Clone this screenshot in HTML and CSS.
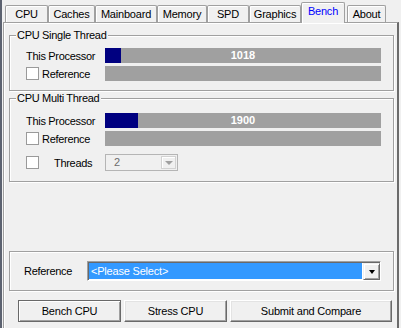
FILE: index.html
```html
<!DOCTYPE html>
<html lang="en">
<head>
  <meta charset="UTF-8">
  <title>CPU-Z Bench</title>
  <link rel="stylesheet" href="styles.css">
</head>
<body>

  <div class="window">
    <div class="tabs">
      <span class="tab tab-cpu">CPU</span>
      <span class="tab tab-caches">Caches</span>
      <span class="tab tab-mainboard">Mainboard</span>
      <span class="tab tab-memory">Memory</span>
      <span class="tab tab-spd">SPD</span>
      <span class="tab tab-graphics">Graphics</span>
      <span class="tab tab-bench active">Bench</span>
      <span class="tab tab-about">About</span>
    </div>

    <div class="panel">

      <div class="group group-single">
        <span class="legend">CPU Single Thread</span>
        <div class="rows">
          <span class="label">This Processor</span>
          <div class="bar">
            <div class="fill" style="width:16px"></div>
            <span class="score">1018</span>
          </div>
          <span class="check-label"><span class="check"></span>Reference</span>
          <div class="bar"></div>
        </div>
      </div>

      <div class="group group-multi">
        <span class="legend">CPU Multi Thread</span>
        <div class="rows">
          <span class="label">This Processor</span>
          <div class="bar">
            <div class="fill" style="width:33px"></div>
            <span class="score">1900</span>
          </div>
          <span class="check-label"><span class="check"></span>Reference</span>
          <div class="bar"></div>
          <span class="check-label threads"><span class="check"></span><span class="threads-text">Threads</span></span>
          <div class="combo">
            <span class="combo-value">2</span>
            <span class="combo-btn"><span class="arrow"></span></span>
          </div>
        </div>
      </div>

      <div class="group group-ref">
        <div class="ref-row">
          <span class="ref-label">Reference</span>
          <div class="select">
            <span class="select-value">&lt;Please Select&gt;</span>
            <span class="select-btn"><span class="arrow"></span></span>
          </div>
        </div>
      </div>

      <div class="buttons">
        <button class="btn btn-default">Bench CPU</button>
        <button class="btn">Stress CPU</button>
        <button class="btn btn-wide">Submit and Compare</button>
      </div>

    </div>
  </div>

</body>
</html>
```

FILE: styles.css
```css
body {
  margin: 0;
  background-color: #f0f0f0;
  font-family: "Liberation Sans", Arial, sans-serif;
  font-size: 11px;
  color: #000;
}

.window {
  width: 401px;
  height: 328px;
  box-sizing: border-box;
  border-left: 2px solid #5c6270;
  padding: 0 2px 0 1px;
  display: flex;
  flex-direction: column;
  overflow: hidden;
}

/* tab strip */
.tabs {
  display: flex;
  align-items: flex-end;
  height: 22px;
  padding-left: 2px;
  flex-shrink: 0;
}

.tab {
  height: 17px;
  box-sizing: border-box;
  border: 1px solid #a0a0a0;
  border-bottom: none;
  border-radius: 2px 2px 0 0;
  box-shadow: inset 1px 1px 0 #fff;
  text-align: center;
  line-height: 16px;
  letter-spacing: -0.2px;
}

.tab-cpu { width: 43px; }
.tab-caches { width: 47px; }
.tab-mainboard { width: 62px; }
.tab-memory { width: 50px; }
.tab-spd { width: 42px; }
.tab-graphics { width: 52px; }
.tab-bench { width: 44px; }
.tab-about { width: 39px; margin-left: 2px; }

.tab.active {
  height: 21px;
  margin-bottom: -1px;
  position: relative;
  z-index: 1;
  background-color: #f0f0f0;
  color: #0000ff;
  line-height: 17px;
}

/* page */
.panel {
  flex: 1;
  border-top: 1px solid #a0a0a0;
  border-left: 1px solid #a0a0a0;
  border-right: 2px solid #6b6b6b;
  box-shadow: inset 1px 1px 0 #fff;
}

.group {
  position: relative;
  border: 1px solid #a0a0a0;
  box-shadow: inset 1px 1px 0 #fff, 1px 1px 0 #fff;
  margin: 0 3px 0 5px;
}

.legend {
  position: absolute;
  top: -7px;
  left: 6px;
  padding: 0 2px 0 1px;
  background-color: #f0f0f0;
  line-height: 13px;
  letter-spacing: -0.3px;
}

.group-single {
  margin-top: 12px;
  padding: 12px 0 9px 16px;
}

.group-multi {
  margin-top: 7px;
  padding: 14px 0 10px 16px;
}

.group-ref {
  margin-top: 69px;
  padding: 9px 0 9px 14px;
}

.rows {
  display: grid;
  grid-template-columns: 79px 276px;
  row-gap: 3px;
  align-items: center;
}

.label,
.check-label,
.ref-label {
  letter-spacing: -0.3px;
}

.check-label {
  display: flex;
  align-items: center;
  gap: 3px;
}

.check {
  width: 13px;
  height: 13px;
  box-sizing: border-box;
  border: 1px solid #9a9a9a;
  background-color: #fff;
}

.threads {
  margin-top: 5px;
}

.threads-text {
  margin-left: 12px;
}

/* score bars */
.bar {
  position: relative;
  height: 15px;
  background-color: #a0a0a0;
}

.fill {
  height: 100%;
  background-color: #000080;
}

.score {
  position: absolute;
  top: 0;
  left: 0;
  right: 0;
  text-align: center;
  line-height: 15px;
  color: #fff;
  font-weight: bold;
}

/* disabled threads combo */
.combo {
  margin-top: 5px;
  width: 73px;
  height: 17px;
  box-sizing: border-box;
  border: 1px solid #b5b5b5;
  padding: 1px;
  display: flex;
}

.combo-value {
  flex: 1;
  padding-left: 7px;
  line-height: 13px;
  color: #6d6d6d;
}

.combo-btn {
  width: 15px;
  box-sizing: border-box;
  border: 1px solid #d2d2d2;
  box-shadow: inset 1px 1px 0 #fff;
  display: flex;
  align-items: center;
  justify-content: center;
}

.combo-btn .arrow {
  border-top: 4px solid #a0a0a0;
  border-left: 4px solid transparent;
  border-right: 4px solid transparent;
}

/* reference picker */
.ref-row {
  display: grid;
  grid-template-columns: 63px 294px;
  align-items: center;
}

.select {
  height: 20px;
  box-sizing: border-box;
  border: 1px solid;
  border-color: #a0a0a0 #fff #fff #a0a0a0;
  box-shadow: inset 1px 1px 0 #696969;
  background-color: #fff;
  padding: 1px 0 0 1px;
  display: flex;
}

.select-value {
  flex: 1;
  margin: 0 1px 1px 0;
  padding-left: 2px;
  background-color: #3399ff;
  color: #fff;
  line-height: 16px;
  letter-spacing: -0.2px;
}

.select-btn {
  width: 17px;
  box-sizing: border-box;
  border: 1px solid;
  border-color: #f0f0f0 #696969 #696969 #f0f0f0;
  box-shadow: inset 1px 1px 0 #fff, inset -1px -1px 0 #a0a0a0;
  background-color: #f0f0f0;
  display: flex;
  align-items: center;
  justify-content: center;
}

.select-btn .arrow {
  border-top: 4px solid #000;
  border-left: 3.5px solid transparent;
  border-right: 3.5px solid transparent;
}

/* bottom buttons */
.buttons {
  display: flex;
  gap: 3px;
  margin: 9px 0 0 14px;
}

.btn {
  width: 103px;
  height: 22px;
  padding: 0;
  font-family: inherit;
  font-size: 11px;
  color: #000;
  letter-spacing: -0.2px;
  background-color: #f0f0f0;
  border: 1px solid;
  border-color: #fff #696969 #696969 #fff;
  box-shadow: inset -1px -1px 0 #a0a0a0, inset 1px 1px 0 #e3e3e3;
}

.btn-default {
  border-color: #696969;
  box-shadow: inset 1px 1px 0 #fff, inset -1px -1px 0 #a0a0a0;
}

.btn-wide {
  width: 162px;
}
```
